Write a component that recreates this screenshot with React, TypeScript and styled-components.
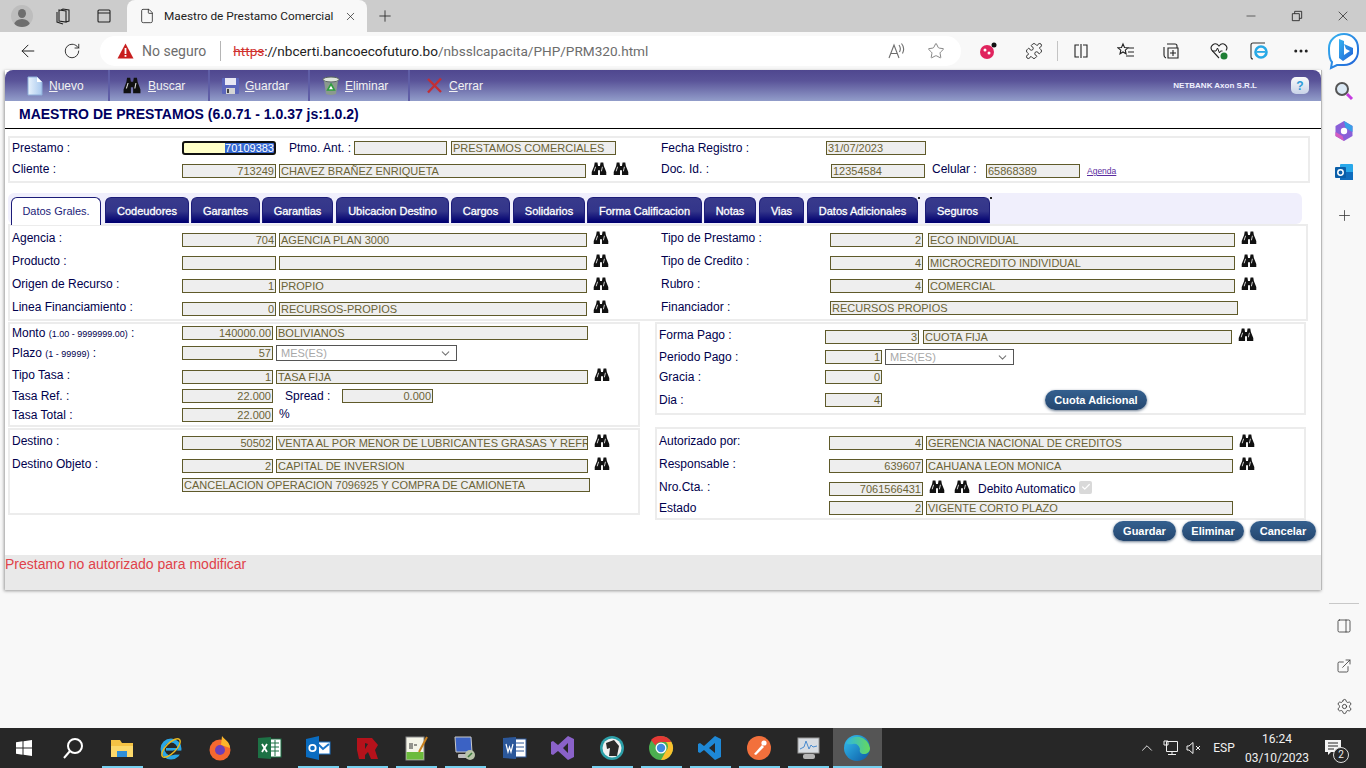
import React from 'react';
import styled, { createGlobalStyle } from 'styled-components';
import {
  ArrowLeft,
  RotateCw,
  Star,
  Puzzle,
  Minus,
  X,
  Plus,
  Ellipsis,
  ExternalLink,
  Settings,
  ChevronUp,
  ChevronDown,
  File as FileIcon,
  PanelRight,
  Check,
} from 'lucide-react';

const GlobalStyle = createGlobalStyle`
  html, body {
    margin: 0;
    padding: 0;
    background: #f8f8f8;
  }
  * {
    box-sizing: border-box;
  }
`;

const Screen = styled.div`
  width: 1366px;
  height: 768px;
  display: flex;
  flex-direction: column;
  overflow: hidden;
  font-family: "Liberation Sans", Arial, sans-serif;
`;

/* ---------- browser chrome ---------- */

const TitleBar = styled.div`
  height: 32px;
  flex: none;
  background: #cccccc;
  display: grid;
  grid-template-columns: 44px 36px 47px 240px 36px 1fr 46px 46px 46px;
  align-items: center;
  color: #222;
`;

const Slot = styled.div`
  display: flex;
  align-items: center;
  justify-content: center;
`;

const BrowserTab = styled.div`
  height: 32px;
  background: #f8f8f8;
  border-radius: 8px 8px 0 0;
  display: flex;
  align-items: center;
  padding-left: 12px;
  font-family: Roboto, sans-serif;
  font-size: 11.8px;
  color: #222;
`;

const BrowserTabText = styled.span`
  margin-left: 9px;
  width: 180px;
  white-space: nowrap;
`;

const Avatar = styled.div`
  width: 22px;
  height: 22px;
  border-radius: 50%;
  background: #bdbdbd;
  position: relative;
  overflow: hidden;

  &::before {
    content: '';
    position: absolute;
    left: 7px;
    top: 4px;
    width: 8px;
    height: 9px;
    border-radius: 50%;
    background: #6e6e6e;
  }
  &::after {
    content: '';
    position: absolute;
    left: 3px;
    top: 14px;
    width: 16px;
    height: 12px;
    border-radius: 50%;
    background: #6e6e6e;
  }
`;

const AddressRow = styled.div`
  height: 36px;
  flex: none;
  background: #f8f8f8;
  display: flex;
  align-items: center;
  padding-top: 2px;
  color: #222;
`;

const NavBtn = styled.div`
  width: 44px;
  margin-left: ${({ $first }: { $first?: boolean }) => ($first ? '6px' : '0')};
  display: flex;
  justify-content: center;
`;

const UrlPill = styled.div`
  margin-left: 6px;
  width: 861px;
  height: 30px;
  background: #fff;
  border-radius: 15px;
  display: flex;
  align-items: center;
  font-family: Roboto, sans-serif;
  font-size: 14px;
  padding-left: 17px;
`;

const NotSecure = styled.span`
  margin-left: 8px;
  color: #6d6d6d;
`;

const UrlDivider = styled.span`
  width: 1px;
  height: 20px;
  background: #b5b5b5;
  margin: 0 12px 0 14px;
`;

const UrlText = styled.span`
  font-size: 13.6px;
  white-space: nowrap;
`;

const Https = styled.span`
  color: #d0312d;
  text-decoration: line-through;
`;

const UrlHost = styled.span`
  color: #222;
`;

const UrlPath = styled.span`
  color: #6d6d6d;
`;

const PillIcons = styled.div`
  margin-left: auto;
  display: grid;
  grid-template-columns: 41px 40px;
  padding-right: 5px;
  justify-items: center;
  color: #6d6d6d;
`;

const ExtTray = styled.div`
  display: grid;
  grid-template-columns: 54px 38px 8px 40px 50px 40px 56px 24px 60px 26px;
  justify-items: center;
  align-items: center;
`;

const ExtDivider = styled.div`
  width: 1px;
  height: 20px;
  background: #c4c4c4;
`;

const Body = styled.div`
  flex: 1;
  display: flex;
  min-height: 0;
  padding-top: 2px;
`;

const Sidebar = styled.div`
  width: 44px;
  flex: none;
  display: flex;
  flex-direction: column;
  padding: 1px 0 2px;
  color: #333;
`;

const SideItem = styled.div<{ $gap?: number }>`
  height: 40px;
  margin-top: ${({ $gap }) => $gap ?? 0}px;
  display: flex;
  align-items: center;
  justify-content: center;
`;

const SideDivider = styled.div`
  margin: auto 7px 2px;
  height: 1px;
  background: #c8c8c8;
`;

/* ---------- page ---------- */

const Page = styled.div`
  margin-left: 5px;
  width: 1317px;
  height: 520px;
  background: #fff;
  border-right: 1px solid #b9b9b9;
  box-shadow: -1px 1px 3px #9a9a9a;
  position: relative;
  display: flex;
  flex-direction: column;
`;

const MenuBar = styled.div`
  height: 31px;
  flex: none;
  background: linear-gradient(#4f478f 0%, #5a5499 35%, #929dca 100%);
  border-radius: 8px 8px 0 0;
  display: flex;
  align-items: center;
  color: #f2f2f2;
  font-size: 12px;
`;

const MenuItem = styled.div<{ $w: number; $pad: number; $gap: number }>`
  width: ${({ $w }) => $w}px;
  height: 100%;
  padding-left: ${({ $pad }) => $pad}px;
  display: flex;
  align-items: center;
  gap: ${({ $gap }) => $gap}px;
  border-right: 2px solid #5f5ea6;
`;

const PlainMenuItem = styled(MenuItem)`
  border-right: none;
`;

const Hotkey = styled.span`
  text-decoration: underline;
`;

const Vendor = styled.span`
  margin-left: auto;
  font-size: 8px;
  font-weight: bold;
  color: #f0f0ff;
`;

const HelpBtn = styled.div`
  width: 18px;
  height: 17px;
  margin: 0 12px 0 34px;
  border-radius: 5px;
  background: linear-gradient(#fafafa, #c9d3e8);
  color: #2d9bd8;
  font-size: 12px;
  font-weight: bold;
  display: flex;
  align-items: center;
  justify-content: center;
`;

const PageTitle = styled.h1`
  height: 28px;
  flex: none;
  margin: 0;
  padding: 5px 0 0 14px;
  border-bottom: 1px solid #000;
  font-size: 14px;
  line-height: 17px;
  font-weight: bold;
  color: #000060;
`;

const Panel = styled.div<{ $x?: number; $w: number; $h: number; $top?: number }>`
  margin-left: ${({ $x }) => $x ?? 3}px;
  margin-top: ${({ $top }) => $top ?? 0}px;
  width: ${({ $w }) => $w}px;
  height: ${({ $h }) => $h}px;
  flex: none;
  border: 2px solid #ececec;
  padding-left: 2px;
  display: flex;
`;

const Column = styled.div<{ $w?: number }>`
  width: ${({ $w }) => ($w ? `${$w}px` : 'auto')};
  flex: ${({ $w }) => ($w ? 'none' : '1')};
`;

const Row = styled.div<{ $mt: number }>`
  height: 14px;
  margin-top: ${({ $mt }) => $mt}px;
  display: flex;
  align-items: center;
`;

const Label = styled.div<{ $w: number; $ml?: number; $pb?: number }>`
  width: ${({ $w }) => $w}px;
  margin-left: ${({ $ml }) => $ml ?? 0}px;
  flex: none;
  padding-bottom: ${({ $pb }) => $pb ?? 4}px;
  font-size: 12px;
  color: #00004d;
  white-space: nowrap;
`;

const Hint = styled.small`
  font-size: 9px;
`;

const Field = styled.div<{ $w: number; $ml?: number; $num?: boolean }>`
  width: ${({ $w }) => $w}px;
  margin-left: ${({ $ml }) => $ml ?? 0}px;
  height: 14px;
  flex: none;
  background: #eeeeee;
  border: 1px solid #5f5a2a;
  color: #6b6336;
  font-size: 11px;
  line-height: 12px;
  padding: 0 1px;
  text-align: ${({ $num }) => ($num ? 'right' : 'left')};
  white-space: nowrap;
  overflow: hidden;
`;

const FocusField = styled.div`
  width: 94px;
  height: 14px;
  flex: none;
  background: #ffffc8;
  outline: 2px solid #111;
  outline-offset: -2px;
  border-radius: 3px;
  font-size: 11px;
  line-height: 14px;
  text-align: right;
  padding-right: 2px;
`;

const Selected = styled.span`
  background: #3367d1;
  color: #fff;
`;

const SelectBox = styled.div<{ $w: number }>`
  width: ${({ $w }) => $w}px;
  height: 16px;
  margin-left: 3px;
  flex: none;
  background: #fff;
  border: 1px solid #555;
  color: #a8a8a8;
  font-size: 11px;
  padding-left: 4px;
  padding-right: 4px;
  display: flex;
  align-items: center;
  justify-content: space-between;

  svg {
    color: #777;
  }
`;

const Bino = styled.svg<{ $ml?: number }>`
  margin-left: ${({ $ml }) => $ml ?? 6}px;
  margin-bottom: 5px;
  flex: none;
`;

const AgendaLink = styled.a`
  margin-left: 7px;
  font-size: 8.5px;
  color: #5a2ca0;
  text-decoration: underline;
`;

const Unit = styled.span`
  margin-left: 6px;
  padding-bottom: 2px;
  font-size: 12px;
  color: #00004d;
`;

const AutoDebit = styled.span`
  margin-left: 8px;
  font-size: 12px;
  color: #00004d;
`;

const CheckBox = styled.span`
  width: 13px;
  height: 13px;
  margin-left: 4px;
  margin-bottom: 4px;
  background: #d9d9d9;
  border-radius: 2px;
  color: #fff;
  display: flex;
  align-items: center;
  justify-content: center;
`;

const TabStrip = styled.div`
  margin: 10px 0 0 3px;
  width: 1294px;
  height: 31px;
  flex: none;
  background: #f0effc;
  border-radius: 6px;
  padding: 4px 0 0 3px;
  display: flex;
`;

const Tab = styled.div<{ $w: number; $ml: number; $active?: boolean; $dot?: boolean }>`
  width: ${({ $w }) => $w}px;
  height: ${({ $active }) => ($active ? 28 : 26)}px;
  margin-left: ${({ $ml }) => $ml}px;
  flex: none;
  position: relative;
  border-radius: 6px 6px 0 0;
  background: ${({ $active }) => ($active ? '#fff' : 'linear-gradient(#383a8c 0%, #33358a 55%, #000070 100%)')};
  border: 1px solid #1c1c78;
  border-bottom: ${({ $active }) => ($active ? 'none' : '1px solid #000070')};
  color: ${({ $active }) => ($active ? '#1c1c78' : '#fff')};
  font-size: 11px;
  -webkit-text-stroke: ${({ $active }) => ($active ? '0' : '0.3px #fff')};
  line-height: 26px;
  text-align: center;
  white-space: nowrap;

  &::after {
    content: '';
    display: ${({ $dot }) => ($dot ? 'block' : 'none')};
    position: absolute;
    top: -1px;
    right: -3px;
    width: 2px;
    height: 2px;
    background: #222;
  }
`;

const Lower = styled.div`
  margin-top: 1px;
  height: 198px;
  flex: none;
  display: flex;
`;

const LowerSide = styled.div<{ $gap: number }>`
  width: ${({ $gap }) => $gap}px;
  flex: none;
  display: flex;
  flex-direction: column;
`;

const PillBtn = styled.button<{ $w: number; $ml?: number }>`
  width: ${({ $w }) => $w}px;
  height: 20px;
  margin-left: ${({ $ml }) => $ml ?? 0}px;
  flex: none;
  border: none;
  border-radius: 10px;
  padding: 0;
  background: linear-gradient(#34608f, #24466f);
  box-shadow: 0 1px 3px #6c7c90;
  color: #fff;
  font-family: "Liberation Sans", Arial, sans-serif;
  font-size: 11px;
  font-weight: bold;
`;

const Actions = styled.div`
  margin-top: 1px;
  height: 20px;
  padding-right: 5px;
  flex: none;
  display: flex;
  justify-content: flex-end;
  gap: 6px;
`;

const Footer = styled.div`
  margin-top: 14px;
  height: 35px;
  flex: none;
  background: #e9e9e9;
  padding-top: 1px;
  font-size: 14px;
  line-height: 16px;
  color: #e0424a;
`;

/* ---------- taskbar ---------- */

const Taskbar = styled.div`
  height: 40px;
  margin-top: auto;
  flex: none;
  background: #272727;
  display: flex;
  align-items: center;
  color: #f0f0f0;
  font-family: Roboto, sans-serif;
  font-size: 12px;
`;

const TaskBtn = styled.div<{ $w?: number; $open?: boolean; $active?: boolean }>`
  width: ${({ $w }) => $w ?? 49}px;
  height: 40px;
  flex: none;
  position: relative;
  background: ${({ $active }) => ($active ? '#555' : 'transparent')};
  display: flex;
  align-items: center;
  justify-content: center;

  &::after {
    content: '';
    display: ${({ $open }) => ($open ? 'block' : 'none')};
    position: absolute;
    left: ${({ $active }) => ($active ? 0 : 4)}px;
    right: ${({ $active }) => ($active ? 0 : 4)}px;
    bottom: 0;
    height: 2px;
    background: #76d0f0;
  }
`;

const TrayItem = styled.div<{ $w: number }>`
  width: ${({ $w }) => $w}px;
  flex: none;
  text-align: center;
  display: flex;
  justify-content: center;
  align-items: center;
`;

const Tray = styled.div`
  margin-left: auto;
  margin-right: 12px;
  display: flex;
  align-items: center;
`;

const Clock = styled.div`
  line-height: 19px;
  padding-top: 2px;
  text-align: center;
`;

const NotifyBadge = styled.span`
  position: absolute;
  right: 5px;
  bottom: 5px;
  width: 16px;
  height: 16px;
  border-radius: 50%;
  background: #272727;
  border: 1px solid #ddd;
  font-size: 10px;
  line-height: 14px;
  text-align: center;
`;

const NotifyWrap = styled.div`
  position: relative;
  width: 43px;
  height: 40px;
  display: flex;
  align-items: center;
  justify-content: center;
`;

/* ---------- drawings ---------- */

const binoBody = 'M3.6.6h2.8l.6 3.4h2l.6-3.4h2.8l.6 3.6 2.5 6v3.2H9V8.5H7v4.900H.5v-3.200l2.500-6z';
const binoShine = 'M4 5 2.500 9.500h1L5 5zM11 5 10 9.500h1L12 5z';

const Binoculars = ({ ml }: { ml?: number }) => (
  <Bino $ml={ml} width={16} height={13.6} viewBox="0 0 16 14">
    <path d={binoBody} fill="#111" />
    <path d={binoShine} fill="#d8d8d8" />
  </Bino>
);

const ToolIcon = styled.svg`
  flex: none;
`;

const BigBinoculars = () => (
  <ToolIcon width="18" height="17" viewBox="0 0 16 14" preserveAspectRatio="none">
    <path d={binoBody} fill="#111" />
    <path d={binoShine} fill="#d8d8d8" />
  </ToolIcon>
);

const DocIcon = () => (
  <ToolIcon width="18" height="20" viewBox="0 0 18 20">
    <defs>
      <linearGradient id="doc" x1="0" x2="1">
        <stop offset="0" stopColor="#e8f2fc" />
        <stop offset="1" stopColor="#a9c9ee" />
      </linearGradient>
    </defs>
    <path d="M2 1h9l5 5v13H2z" fill="url(#doc)" stroke="#8fb0da" />
    <path d="M11 1v5h5z" fill="#fff" />
  </ToolIcon>
);

const DiskIcon = () => (
  <ToolIcon width="19" height="18" viewBox="0 0 19 18">
    <rect x="1" y="1" width="17" height="16" rx="1" fill="#5c66bb" />
    <rect x="4" y="1" width="11" height="7" fill="#e8e8f4" />
    <rect x="5" y="11" width="9" height="6" fill="#d5d5d5" />
    <rect x="6" y="12" width="2" height="4" fill="#444" />
  </ToolIcon>
);

const BinIcon = () => (
  <ToolIcon width="18" height="20" viewBox="0 0 18 20">
    <ellipse cx="9" cy="3.5" rx="8" ry="2.5" fill="#dfe6dd" stroke="#59665b" />
    <path d="M2 5l2 13q5 2 10 0l2-13q-7 3-14 0z" fill="#8b9a8e" />
    <path d="M9 8l3.4 6H5.6z" fill="#fff" stroke="#2f9e3f" strokeWidth="1.6" />
  </ToolIcon>
);

const CloseIcon = () => (
  <ToolIcon width="17" height="17" viewBox="0 0 17 17">
    <path d="M2 2l13 13M15 1.5 2 15.5" stroke="#c22f35" strokeWidth="2.4" />
  </ToolIcon>
);

const Warning = () => (
  <svg width="17" height="16" viewBox="0 0 17 16">
    <path d="M8.5.5 16.5 15.5H.5z" fill="#c81e1e" />
    <rect x="7.6" y="5" width="1.8" height="6" fill="#fff" />
    <rect x="7.6" y="12" width="1.8" height="1.8" fill="#fff" />
  </svg>
);

const Line = ({ d, w = 18, c = 'currentColor' }: { d: string; w?: number; c?: string }) => (
  <svg width={w} height={w} viewBox="0 0 18 18" fill="none" stroke={c} strokeWidth="1.1">
    <path d={d} />
  </svg>
);

const BingLogo = () => (
  <svg width="32" height="38" viewBox="0 0 32 38">
    <defs>
      <linearGradient id="bing" x1="0" x2="1" y1="0" y2="1">
        <stop offset="0" stopColor="#37b4f0" />
        <stop offset="1" stopColor="#1f5fd6" />
      </linearGradient>
    </defs>
    <path
      d="M16 2c8 0 14 6 14 14v3c0 8-6 14-14 14H9l-6 3 1-6C1 27 1 23 1 18v-2C1 8 8 2 16 2z"
      fill="#fff"
      stroke="url(#bing)"
      strokeWidth="2"
    />
    <path d="M11 7l5 2v14l6-4-4-2-2-5 9 4v6l-10 7-4-3z" fill="url(#bing)" />
  </svg>
);

const Ic = ({ children }: { children: React.ReactNode }) => (
  <svg width="26" height="26" viewBox="0 0 26 26">
    {children}
  </svg>
);

const taskIcons: { key: string; open?: boolean; active?: boolean; art: React.ReactNode }[] = [
  {
    key: 'folder',
    open: true,
    art: (
      <Ic>
        <path d="M2 5h9l2 3h11v14H2z" fill="#f5c344" />
        <rect x="2" y="11" width="22" height="11" fill="#fcd96b" />
        <rect x="8" y="16" width="10" height="6" fill="#2f8fd8" />
      </Ic>
    ),
  },
  {
    key: 'ie',
    art: (
      <Ic>
        <circle cx="13" cy="14" r="8.5" fill="none" stroke="#2aa6e6" strokeWidth="4" />
        <rect x="8" y="13" width="11" height="2.6" fill="#2aa6e6" />
        <rect x="15" y="15.6" width="8" height="4" fill="#272727" />
        <ellipse cx="13" cy="13" rx="12" ry="5" fill="none" stroke="#e8b923" strokeWidth="1.4" transform="rotate(-45 13 13)" />
      </Ic>
    ),
  },
  {
    key: 'firefox',
    art: (
      <Ic>
        <circle cx="13" cy="15" r="10.5" fill="#f7682f" />
        <path d="M15 1c3 4 8 6 8 12l-9-3z" fill="#fdb52b" />
        <circle cx="13" cy="15" r="5" fill="#6e3fb8" />
      </Ic>
    ),
  },
  {
    key: 'excel',
    art: (
      <Ic>
        <rect x="10" y="4" width="15" height="18" fill="#fff" stroke="#1d7145" />
        <path d="M15 8h8M15 12h8M15 16h8M19 5v16" stroke="#1d7145" strokeWidth="1" />
        <path d="M2 3l13-1v22L2 23z" fill="#1d7145" />
        <path d="M6 9l5 8M11 9l-5 8" stroke="#fff" strokeWidth="1.8" />
      </Ic>
    ),
  },
  {
    key: 'outlook',
    open: true,
    art: (
      <Ic>
        <rect x="12" y="7" width="13" height="12" fill="#fff" stroke="#1a75c9" />
        <path d="M13 9l5 5 6-5" stroke="#1a75c9" strokeWidth="2" fill="none" />
        <path d="M1 4l13-3v24L1 22z" fill="#0a6cc0" />
        <circle cx="7.5" cy="13" r="3.2" fill="none" stroke="#fff" strokeWidth="1.8" />
      </Ic>
    ),
  },
  {
    key: 'red',
    open: true,
    art: (
      <Ic>
        <path d="M3 3h15l6 7-3 5 3 9h-7l-3-7-3 3v4H5L3 15z" fill="#b5121b" />
        <path d="M11 8l3 1-3 5z" fill="#272727" />
      </Ic>
    ),
  },
  {
    key: 'notepad',
    open: true,
    art: (
      <Ic>
        <rect x="3" y="2" width="18" height="23" fill="#f4f4e8" stroke="#888" />
        <rect x="3.5" y="17" width="17" height="7.5" fill="#6cbb3c" />
        <path d="M7 8v6M9 8v6M11 10h3" stroke="#333" />
        <path d="M24 2l-8 15" stroke="#c9801c" strokeWidth="2" />
      </Ic>
    ),
  },
  {
    key: 'monitor',
    open: true,
    art: (
      <Ic>
        <path d="M3 2h16l1 15H4z" fill="#3b62c4" stroke="#c9c9c9" />
        <rect x="6" y="19" width="12" height="4" rx="1" fill="#bdbdbd" />
        <circle cx="18" cy="20" r="5" fill="#b8c4a8" />
        <path d="M16 22l4-4" stroke="#3d7a3d" strokeWidth="1.6" />
      </Ic>
    ),
  },
  {
    key: 'word',
    art: (
      <Ic>
        <rect x="11" y="4" width="14" height="18" fill="#fff" stroke="#2b579a" />
        <path d="M15 8h8M15 12h8M15 16h8" stroke="#2b579a" />
        <path d="M2 3l13-1v22L2 23z" fill="#2b579a" />
        <path d="M5 9l2 8 1.5-5 1.5 5 2-8" stroke="#fff" strokeWidth="1.2" fill="none" />
      </Ic>
    ),
  },
  {
    key: 'vs',
    art: (
      <Ic>
        <path d="M18 1l6 3v18l-6 3-10-9-5 4-2-1V7l2-1 5 4zM18 8l-5 5 5 5z" fill="#8a62c9" />
      </Ic>
    ),
  },
  {
    key: 'dog',
    open: true,
    art: (
      <Ic>
        <circle cx="13" cy="13" r="12" fill="#2c9fa8" />
        <circle cx="13" cy="13" r="9.5" fill="#f1f1f1" />
        <path d="M7 8l8-3 5 6-2 10h-8l1-8-3 1z" fill="#2a2a2a" />
      </Ic>
    ),
  },
  {
    key: 'chrome',
    open: true,
    art: (
      <Ic>
        <circle cx="13" cy="13" r="12" fill="#4caf50" />
        <path d="M13 1a12 12 0 0 1 10.4 6H13a6 6 0 0 0-5.6 3.6L3 5A12 12 0 0 1 13 1z" fill="#e53935" />
        <path d="M23.4 7A12 12 0 0 1 13 25l5-9a6 6 0 0 0 0-9z" fill="#fbc02d" />
        <circle cx="13" cy="13" r="5.5" fill="#fff" />
        <circle cx="13" cy="13" r="4.2" fill="#3f8ae0" />
      </Ic>
    ),
  },
  {
    key: 'vscode',
    open: true,
    art: (
      <Ic>
        <path d="M18 1l6 3v18l-6 3L7 15l-4 3-2-1V9l2-1 4 3zM18 8l-6 5 6 5z" fill="#1e88d6" />
      </Ic>
    ),
  },
  {
    key: 'postman',
    open: true,
    art: (
      <Ic>
        <circle cx="13" cy="13" r="12" fill="#f2703c" />
        <path d="M8 19l8-9 2 2-8 8z" fill="#fff" />
        <circle cx="18" cy="8" r="2.6" fill="#fff" />
      </Ic>
    ),
  },
  {
    key: 'perf',
    open: true,
    art: (
      <Ic>
        <rect x="3" y="3" width="21" height="15" fill="#d8dde2" stroke="#999" />
        <path d="M5 14l4-2 2-6 3 8 2-4 2 2 4-1" stroke="#4a8ccf" fill="none" />
        <rect x="8" y="19" width="12" height="5" rx="2" fill="#b5b5b5" />
      </Ic>
    ),
  },
  {
    key: 'edge',
    open: true,
    active: true,
    art: (
      <svg width="28" height="28" viewBox="0 0 28 28">
        <defs>
          <linearGradient id="edgeA" x1="0" x2="1" y1="0" y2="1">
            <stop offset="0" stopColor="#35c1f1" />
            <stop offset="1" stopColor="#0c59a4" />
          </linearGradient>
          <linearGradient id="edgeB" x1="0" x2="1">
            <stop offset="0" stopColor="#2fb6e0" />
            <stop offset="1" stopColor="#66d95c" />
          </linearGradient>
        </defs>
        <circle cx="14" cy="14" r="13" fill="url(#edgeA)" />
        <path d="M3 9A13 13 0 0 1 27 14c0 4-3 6-6 6s-5-2-4-5c-1-4-4-6-7-5-3 0-5 1-7-1z" fill="url(#edgeB)" />
      </svg>
    ),
  },
];

const tabs = [
  { label: 'Codeudores', w: 84, ml: 4 },
  { label: 'Garantes', w: 69, ml: 2 },
  { label: 'Garantias', w: 71, ml: 2 },
  { label: 'Ubicacion Destino', w: 113, ml: 3 },
  { label: 'Cargos', w: 59, ml: 2 },
  { label: 'Solidarios', w: 72, ml: 3 },
  { label: 'Forma Calificacion', w: 115, ml: 2 },
  { label: 'Notas', w: 52, ml: 2 },
  { label: 'Vias', w: 45, ml: 3 },
  { label: 'Datos Adicionales', w: 111, ml: 3, dot: true },
  { label: 'Seguros', w: 65, ml: 7, dot: true },
];

export default function App() {
  return (
    <Screen>
      <GlobalStyle />

      <TitleBar>
        <Slot>
          <Avatar />
        </Slot>
        <Slot>
          <Line d="M6 3l7 1v11l-7-1zM4 5v10l6 2M8 3l2-1 6 1v11l-3 1" />
        </Slot>
        <Slot>
          <Line d="M4 3h10a1 1 0 0 1 1 1v10a1 1 0 0 1-1 1H4a1 1 0 0 1-1-1V4a1 1 0 0 1 1-1zM3 6h12" />
        </Slot>
        <BrowserTab>
          <FileIcon size={16} strokeWidth={1.2} />
          <BrowserTabText>Maestro de Prestamo Comercial</BrowserTabText>
          <X size={13} strokeWidth={1.3} />
        </BrowserTab>
        <Slot>
          <Plus size={18} strokeWidth={1.1} />
        </Slot>
        <span />
        <Slot>
          <Minus size={14} strokeWidth={1.1} />
        </Slot>
        <Slot>
          <Line w={14} d="M3 6h9v9H3zM6 6V3h9v9h-3" />
        </Slot>
        <Slot>
          <X size={16} strokeWidth={1.1} />
        </Slot>
      </TitleBar>

      <AddressRow>
        <NavBtn $first>
          <ArrowLeft size={20} strokeWidth={1.2} />
        </NavBtn>
        <NavBtn>
          <RotateCw size={18} strokeWidth={1.2} />
        </NavBtn>
        <UrlPill>
          <Warning />
          <NotSecure>No seguro</NotSecure>
          <UrlDivider />
          <UrlText>
            <Https>https</Https>
            <UrlHost>://nbcerti.bancoecofuturo.bo</UrlHost>
            <UrlPath>/nbsslcapacita/PHP/PRM320.html</UrlPath>
          </UrlText>
          <PillIcons>
            <Line d="M2 16 7 3l5 13M4 11.500h6M12 3c1.500 2 1.500 5 .5 7M14.500 1.500c2.500 3 2.500 7 1 10" />
            <Star size={18} strokeWidth={1.1} />
          </PillIcons>
        </UrlPill>
        <ExtTray>
          <svg width="18" height="18" viewBox="0 0 18 18">
            <circle cx="8" cy="10" r="7" fill="#e0245e" />
            <circle cx="6" cy="8" r="1.5" fill="#fff" />
            <circle cx="10" cy="11" r="1.5" fill="#fff" />
            <circle cx="15" cy="3" r="2.5" fill="#111" />
          </svg>
          <Puzzle size={18} strokeWidth={1.2} />
          <ExtDivider />
          <Line d="M9 2v14M7 3H3v12h4M11 3h4v12h-4" />
          <Line d="M6 2l1.5 3.5 3.5.3-2.7 2.4.8 3.6L6 10l-3 1.8.8-3.6L1 5.8l3.5-.3zM11 6h6M11 10h6M9 14h8" />
          <Line d="M5 2h8a2 2 0 0 1 2 2v2M2 5v8a3 3 0 0 0 2 3M6 6h10v10H6zM11 8v6M8 11h6" />
          <svg width="20" height="20" viewBox="0 0 20 20" fill="none">
            <path d="M10 17 3 9.5C0 5 6 0 10 5c4-5 10 0 7 4.500" stroke="#222" strokeWidth="1.1" />
            <path d="M3 10h4l1.500-3 2 5 1-2h2" stroke="#222" strokeWidth="1" />
            <circle cx="15" cy="15" r="3.500" fill="#1e7e34" />
          </svg>
          <svg width="20" height="20" viewBox="0 0 20 20" fill="none">
            <path d="M4 18a2 2 0 0 1-2-2V4a2 2 0 0 1 2-2h12" stroke="#333" strokeWidth="1.100" />
            <circle cx="12" cy="11" r="5.500" stroke="#27a9e6" strokeWidth="2.600" />
            <rect x="8" y="10" width="8" height="1.800" fill="#27a9e6" />
          </svg>
          <Ellipsis size={18} strokeWidth={2} />
          <BingLogo />
        </ExtTray>
      </AddressRow>

      <Body>
        <Page>
          <MenuBar>
            <MenuItem $w={105} $pad={21} $gap={5}>
              <DocIcon />
              <span>
                <Hotkey>N</Hotkey>uevo
              </span>
            </MenuItem>
            <MenuItem $w={100} $pad={13} $gap={7}>
              <BigBinoculars />
              <span>
                <Hotkey>B</Hotkey>uscar
              </span>
            </MenuItem>
            <MenuItem $w={100} $pad={11} $gap={5}>
              <DiskIcon />
              <span>
                <Hotkey>G</Hotkey>uardar
              </span>
            </MenuItem>
            <MenuItem $w={100} $pad={12} $gap={5}>
              <BinIcon />
              <span>
                <Hotkey>E</Hotkey>liminar
              </span>
            </MenuItem>
            <PlainMenuItem $w={100} $pad={16} $gap={6}>
              <CloseIcon />
              <span>
                <Hotkey>C</Hotkey>errar
              </span>
            </PlainMenuItem>
            <Vendor>NETBANK Axon S.R.L</Vendor>
            <HelpBtn>?</HelpBtn>
          </MenuBar>

          <PageTitle>MAESTRO DE PRESTAMOS (6.0.71 - 1.0.37 js:1.0.2)</PageTitle>

          <Panel $top={7} $w={1302} $h={47}>
            <Column $w={649}>
              <Row $mt={3}>
                <Label $w={170} $pb={1}>
                  Prestamo :
                </Label>
                <FocusField>
                  <Selected>70109383</Selected>
                </FocusField>
                <Label $w={65} $ml={13} $pb={1}>
                  Ptmo. Ant. :
                </Label>
                <Field $w={93} />
                <Field $w={165} $ml={4}>
                  PRESTAMOS COMERCIALES
                </Field>
              </Row>
              <Row $mt={9}>
                <Label $w={170}>Cliente :</Label>
                <Field $w={94} $num>
                  713249
                </Field>
                <Field $w={307} $ml={3}>
                  CHAVEZ BRAÑEZ ENRIQUETA
                </Field>
                <Binoculars ml={5} />
                <Binoculars ml={6} />
              </Row>
            </Column>
            <Column>
              <Row $mt={3}>
                <Label $w={165} $pb={1}>
                  Fecha Registro :
                </Label>
                <Field $w={100}>31/07/2023</Field>
              </Row>
              <Row $mt={9}>
                <Label $w={170}>Doc. Id. :</Label>
                <Field $w={94}>12354584</Field>
                <Label $w={54} $ml={7}>
                  Celular :
                </Label>
                <Field $w={94}>65868389</Field>
                <AgendaLink>Agenda</AgendaLink>
              </Row>
            </Column>
          </Panel>

          <TabStrip>
            <Tab $w={90} $ml={0} $active>
              Datos Grales.
            </Tab>
            {tabs.map((tab) => (
              <Tab key={tab.label} $w={tab.w} $ml={tab.ml} $dot={tab.dot}>
                {tab.label}
              </Tab>
            ))}
          </TabStrip>

          <Panel $w={1300} $h={97}>
            <Column $w={649}>
              <Row $mt={7}>
                <Label $w={170}>Agencia :</Label>
                <Field $w={94} $num>
                  704
                </Field>
                <Field $w={308} $ml={3}>
                  AGENCIA PLAN 3000
                </Field>
                <Binoculars />
              </Row>
              <Row $mt={9}>
                <Label $w={170}>Producto :</Label>
                <Field $w={94} $num />
                <Field $w={308} $ml={3} />
                <Binoculars />
              </Row>
              <Row $mt={9}>
                <Label $w={170}>Origen de Recurso :</Label>
                <Field $w={94} $num>
                  1
                </Field>
                <Field $w={308} $ml={3}>
                  PROPIO
                </Field>
                <Binoculars />
              </Row>
              <Row $mt={9}>
                <Label $w={170}>Linea Financiamiento :</Label>
                <Field $w={94} $num>
                  0
                </Field>
                <Field $w={308} $ml={3}>
                  RECURSOS-PROPIOS
                </Field>
                <Binoculars />
              </Row>
            </Column>
            <Column>
              <Row $mt={7}>
                <Label $w={169}>Tipo de Prestamo :</Label>
                <Field $w={93} $num>
                  2
                </Field>
                <Field $w={307} $ml={5}>
                  ECO INDIVIDUAL
                </Field>
                <Binoculars />
              </Row>
              <Row $mt={9}>
                <Label $w={169}>Tipo de Credito :</Label>
                <Field $w={93} $num>
                  4
                </Field>
                <Field $w={307} $ml={5}>
                  MICROCREDITO INDIVIDUAL
                </Field>
                <Binoculars />
              </Row>
              <Row $mt={9}>
                <Label $w={169}>Rubro :</Label>
                <Field $w={93} $num>
                  4
                </Field>
                <Field $w={307} $ml={5}>
                  COMERCIAL
                </Field>
                <Binoculars />
              </Row>
              <Row $mt={8}>
                <Label $w={169} $pb={2}>
                  Financiador :
                </Label>
                <Field $w={408}>RECURSOS PROPIOS</Field>
              </Row>
            </Column>
          </Panel>

          <Lower>
            <LowerSide $gap={650}>
              <Panel $w={632} $h={105}>
                <Column>
                  <Row $mt={2}>
                    <Label $w={170} $pb={0}>
                      Monto <Hint>(1.00 - 9999999.00)</Hint> :
                    </Label>
                    <Field $w={91} $num>
                      140000.00
                    </Field>
                    <Field $w={312} $ml={3}>
                      BOLIVIANOS
                    </Field>
                  </Row>
                  <Row $mt={6}>
                    <Label $w={170} $pb={0}>
                      Plazo <Hint>(1 - 99999)</Hint> :
                    </Label>
                    <Field $w={91} $num>
                      57
                    </Field>
                    <SelectBox $w={181}>
                      MES(ES)
                      <ChevronDown size={13} strokeWidth={2} />
                    </SelectBox>
                  </Row>
                  <Row $mt={10}>
                    <Label $w={170}>Tipo Tasa :</Label>
                    <Field $w={91} $num>
                      1
                    </Field>
                    <Field $w={312} $ml={3}>
                      TASA FIJA
                    </Field>
                    <Binoculars />
                  </Row>
                  <Row $mt={5}>
                    <Label $w={170} $pb={0}>
                      Tasa Ref. :
                    </Label>
                    <Field $w={91} $num>
                      22.000
                    </Field>
                    <Label $w={57} $ml={12} $pb={0}>
                      Spread :
                    </Label>
                    <Field $w={91} $num>
                      0.000
                    </Field>
                  </Row>
                  <Row $mt={5}>
                    <Label $w={170} $pb={0}>
                      Tasa Total :
                    </Label>
                    <Field $w={91} $num>
                      22.000
                    </Field>
                    <Unit>%</Unit>
                  </Row>
                </Column>
              </Panel>
              <Panel $w={632} $h={87} $top={1}>
                <Column>
                  <Row $mt={6}>
                    <Label $w={170}>Destino :</Label>
                    <Field $w={91} $num>
                      50502
                    </Field>
                    <Field $w={312} $ml={3}>
                      VENTA AL POR MENOR DE LUBRICANTES GRASAS Y REFR
                    </Field>
                    <Binoculars />
                  </Row>
                  <Row $mt={9}>
                    <Label $w={170}>Destino Objeto :</Label>
                    <Field $w={91} $num>
                      2
                    </Field>
                    <Field $w={312} $ml={3}>
                      CAPITAL DE INVERSION
                    </Field>
                    <Binoculars />
                  </Row>
                  <Row $mt={5}>
                    <Label $w={170} />
                    <Field $w={408}>CANCELACION OPERACION 7096925 Y COMPRA DE CAMIONETA</Field>
                  </Row>
                </Column>
              </Panel>
            </LowerSide>
            <LowerSide $gap={655}>
              <Panel $w={651} $h={93} $x={0}>
                <Column>
                  <Row $mt={6}>
                    <Label $w={166}>Forma Pago :</Label>
                    <Field $w={94} $num>
                      3
                    </Field>
                    <Field $w={309} $ml={4}>
                      CUOTA FIJA
                    </Field>
                    <Binoculars />
                  </Row>
                  <Row $mt={6}>
                    <Label $w={166} $pb={0}>
                      Periodo Pago :
                    </Label>
                    <Field $w={57} $num>
                      1
                    </Field>
                    <SelectBox $w={129}>
                      MES(ES)
                      <ChevronDown size={13} strokeWidth={2} />
                    </SelectBox>
                  </Row>
                  <Row $mt={6}>
                    <Label $w={166} $pb={0}>
                      Gracia :
                    </Label>
                    <Field $w={57} $num>
                      0
                    </Field>
                  </Row>
                  <Row $mt={9}>
                    <Label $w={166} $pb={0}>
                      Dia :
                    </Label>
                    <Field $w={57} $num>
                      4
                    </Field>
                    <PillBtn $w={102} $ml={163}>
                      Cuota Adicional
                    </PillBtn>
                  </Row>
                </Column>
              </Panel>
              <Panel $w={651} $h={93} $x={0} $top={12}>
                <Column>
                  <Row $mt={7}>
                    <Label $w={170}>Autorizado por:</Label>
                    <Field $w={94} $num>
                      4
                    </Field>
                    <Field $w={307} $ml={3}>
                      GERENCIA NACIONAL DE CREDITOS
                    </Field>
                    <Binoculars />
                  </Row>
                  <Row $mt={9}>
                    <Label $w={170}>Responsable :</Label>
                    <Field $w={94} $num>
                      639607
                    </Field>
                    <Field $w={307} $ml={3}>
                      CAHUANA LEON MONICA
                    </Field>
                    <Binoculars />
                  </Row>
                  <Row $mt={9}>
                    <Label $w={170}>Nro.Cta. :</Label>
                    <Field $w={94} $num>
                      7061566431
                    </Field>
                    <Binoculars />
                    <Binoculars ml={9} />
                    <AutoDebit>Debito Automatico</AutoDebit>
                    <CheckBox>
                      <Check size={10} strokeWidth={3} />
                    </CheckBox>
                  </Row>
                  <Row $mt={5}>
                    <Label $w={170} $pb={0}>
                      Estado
                    </Label>
                    <Field $w={94} $num>
                      2
                    </Field>
                    <Field $w={307} $ml={3}>
                      VIGENTE CORTO PLAZO
                    </Field>
                  </Row>
                </Column>
              </Panel>
            </LowerSide>
          </Lower>

          <Actions>
            <PillBtn $w={63}>Guardar</PillBtn>
            <PillBtn $w={62}>Eliminar</PillBtn>
            <PillBtn $w={66}>Cancelar</PillBtn>
          </Actions>

          <Footer>Prestamo no autorizado para modificar</Footer>
        </Page>

        <Sidebar>
          <SideItem>
            <svg width="20" height="20" viewBox="0 0 20 20" fill="none">
              <circle cx="8" cy="8" r="6" fill="#dbe9f5" stroke="#555" strokeWidth="2" />
              <path d="M13 13l5 5" stroke="#c53be0" strokeWidth="3" />
            </svg>
          </SideItem>
          <SideItem>
            <svg width="20" height="22" viewBox="0 0 20 22">
              <path d="M10 1l8.500 5v10L10 21l-8.500-5V6z" fill="#8a5fd8" />
              <path d="M10 1l8.500 5v6l-7-4z" fill="#3aa0e8" />
              <path d="M1.500 12l7 4 1.500 5-8.500-5z" fill="#d45cc0" />
              <circle cx="10" cy="11" r="3.200" fill="#fff" />
            </svg>
          </SideItem>
          <SideItem $gap={1}>
            <svg width="20" height="20" viewBox="0 0 20 20">
              <rect x="6" y="2" width="13" height="16" rx="1" fill="#28a8ea" />
              <rect x="6" y="10" width="13" height="8" fill="#0f6cbd" />
              <rect x="1" y="5" width="11" height="11" rx="1" fill="#0a5ea8" />
              <circle cx="6.500" cy="10.500" r="2.700" fill="none" stroke="#fff" strokeWidth="1.500" />
            </svg>
          </SideItem>
          <SideItem $gap={3}>
            <Plus size={17} strokeWidth={1.1} />
          </SideItem>
          <SideDivider />
          <SideItem>
            <PanelRight size={16} strokeWidth={1.2} />
          </SideItem>
          <SideItem>
            <ExternalLink size={16} strokeWidth={1.2} />
          </SideItem>
          <SideItem>
            <Settings size={17} strokeWidth={1.2} />
          </SideItem>
        </Sidebar>
      </Body>

      <Taskbar>
        <TaskBtn $w={48}>
          <svg width="16" height="16" viewBox="0 0 16 16" fill="#fff">
            <path d="M0 2.200 6.500 1.300v6.200H0zM7.500 1.200 16 0v7.500H7.500zM0 8.500h6.500v6.200L0 13.800zM7.500 8.500H16V16l-8.500-1.200z" />
          </svg>
        </TaskBtn>
        <TaskBtn $w={49.500}>
          <svg width="24" height="24" viewBox="0 0 24 24" fill="none" stroke="#fff" strokeWidth="2">
            <circle cx="14" cy="10" r="7" />
            <path d="M9 15l-6 7" />
          </svg>
        </TaskBtn>
        {taskIcons.map((icon) => (
          <TaskBtn key={icon.key} $open={icon.open} $active={icon.active}>
            {icon.art}
          </TaskBtn>
        ))}
        <Tray>
          <TrayItem $w={24}>
            <ChevronUp size={18} strokeWidth={1.2} />
          </TrayItem>
          <TrayItem $w={24}>
            <svg width="16" height="16" viewBox="0 0 16 16" fill="none" stroke="#f0f0f0">
              <path d="M3.500 1.500h11v10h-11zM9 11.500v3M5 14.500h8M1 1h4v4H1z" />
            </svg>
          </TrayItem>
          <TrayItem $w={22}>
            <svg width="16" height="16" viewBox="0 0 16 16" fill="none" stroke="#f0f0f0">
              <path d="M1 6v4h2l4 3.500V2.500L3 6zM10 6l4 4M14 6l-4 4" />
            </svg>
          </TrayItem>
          <TrayItem $w={38}>ESP</TrayItem>
          <TrayItem $w={68}>
            <Clock>
              16:24
              <br />
              03/10/2023
            </Clock>
          </TrayItem>
          <NotifyWrap>
            <svg width="16" height="16" viewBox="0 0 16 16">
              <path d="M0 0h16v12H6l-3 3v-3H0z" fill="#f4f4f4" />
              <path d="M3 3h10M3 6h10M3 9h6" stroke="#272727" />
            </svg>
            <NotifyBadge>2</NotifyBadge>
          </NotifyWrap>
        </Tray>
      </Taskbar>
    </Screen>
  );
}
